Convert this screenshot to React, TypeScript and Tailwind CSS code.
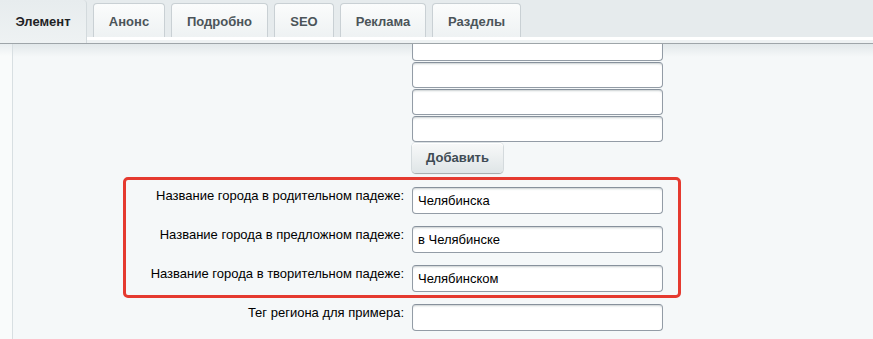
import React from 'react';

const tabs = [
  { label: 'Анонс', w: 'w-[72px]' },
  { label: 'Подробно', w: 'w-[97px]' },
  { label: 'SEO', w: 'w-[60px]' },
  { label: 'Реклама', w: 'w-[86px]' },
  { label: 'Разделы', w: 'w-[89px]' },
];

const inputCls =
  'block w-[251px] rounded-[4px] border border-[#939ca6] border-t-[#87919c] bg-white pl-[5px] text-[13px] leading-[15px] text-black shadow-[inset_0_2px_2px_-1px_rgba(180,188,191,0.7)] outline-none';

const Field = ({ label, value, labelW }: { label: string; value?: string; labelW: string }) => (
  <div className="flex items-start">
    <div className={`${labelW} shrink-0 pr-[8px] pt-[1px] text-right text-[13px] leading-[15px] text-black`}>{label}</div>
    <input className={`${inputCls} h-[27px]`} defaultValue={value} />
  </div>
);

export default function App() {
  return (
    <div className="h-[339px] w-[873px] overflow-hidden bg-[#e6ebed] font-['Liberation_Sans',Arial,sans-serif]">
      {/* Tabs */}
      <div className="flex">
        <div className="flex h-[43px] w-[87px] shrink-0 items-start justify-center rounded-tr-[4px] border-r border-[#d3dadd] bg-[linear-gradient(to_bottom,#e7ecee,#eef2f3)] pt-[12px] text-[13px] font-bold text-[#1f2326]">
          Элемент
        </div>
        <div className="flex flex-1 flex-col">
          <div className="flex h-[37px] items-end gap-[6px] pl-[6px]">
            {tabs.map((t) => (
              <div
                key={t.label}
                className={`${t.w} flex h-[34px] items-start justify-center rounded-t-[4px] border border-b-0 border-[#c9d0d4] bg-[linear-gradient(to_bottom,#fbfcfc,#eef2f3)] pt-[8px] text-[13px] font-bold text-[#4b5459]`}
              >
                {t.label}
              </div>
            ))}
          </div>
          <div className="h-[3px] bg-white" />
          <div className="h-[3px] bg-[#eef2f3]" />
        </div>
      </div>
      <div className="h-px bg-[#9ea5a9]" />

      {/* Content */}
      <div className="flex h-[300px]">
        <div className="w-[13px] shrink-0 border-r border-[#d8dfe2] bg-[linear-gradient(to_bottom,#e9eef0_0px,#f9fbfb_12px)]" />
        <div className="flex-1 overflow-hidden bg-[linear-gradient(to_bottom,#e2e8ea_0px,#f5f8f9_13px)]">
          <div className="-mt-[9px] flex flex-col">
            <div className="ml-[399px] flex flex-col gap-px">
              <input className={`${inputCls} h-[26px]`} />
              <input className={`${inputCls} h-[26px]`} />
              <input className={`${inputCls} h-[26px]`} />
              <input className={`${inputCls} h-[26px]`} />
              <button className="h-[30px] w-[91px] rounded-[4px] bg-[linear-gradient(to_bottom,#f8f9f9,#dfe5e7)] text-[13px] font-bold text-[#3f4b54] shadow-[0_1px_1px_rgba(0,0,0,0.25),inset_0_1px_0_#fff,0_0_0_1px_rgba(170,180,185,0.35)]">
                Добавить
              </button>
            </div>

            <div className="ml-[110px] mt-[4px] flex w-[558px] flex-col gap-[12px] rounded-[5px] border-[3px] border-[#e53a30] pb-[3px] pt-[7px]">
              <Field labelW="w-[286px]" label="Название города в родительном падеже:" value="Челябинска" />
              <Field labelW="w-[286px]" label="Название города в предложном падеже:" value="в Челябинске" />
              <Field labelW="w-[286px]" label="Название города в творительном падеже:" value="Челябинском" />
            </div>

            <div className="mt-[6px]">
              <Field labelW="w-[399px]" label="Тег региона для примера:" />
            </div>
          </div>
        </div>
      </div>
    </div>
  );
}
